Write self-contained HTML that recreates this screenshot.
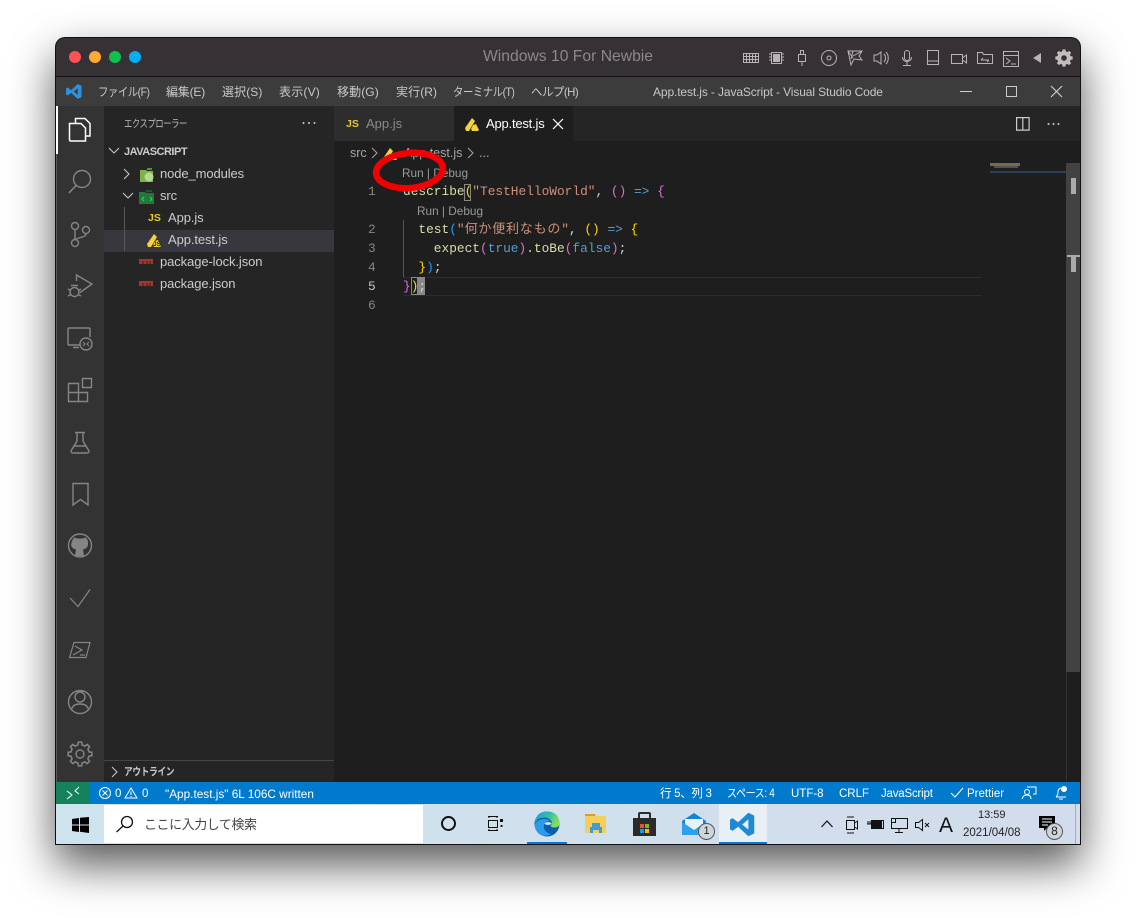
<!DOCTYPE html>
<html><head><meta charset="utf-8">
<style>
html,body{margin:0;padding:0;background:#fff;width:1136px;height:918px;overflow:hidden}
body{position:relative;font-family:"Liberation Sans","Noto Sans CJK JP",sans-serif}
.a{position:absolute}
.t{position:absolute;white-space:nowrap;line-height:16px;font-size:12.5px;color:#ccc;transform-origin:0 50%}
.m{font-size:12px;color:#c8c8c8;letter-spacing:-.6px;top:84px}
.f{font-size:13px;color:#cccccc;letter-spacing:-.1px}
.c{position:absolute;white-space:pre;font-family:"Liberation Mono","Noto Sans CJK JP",monospace;font-size:12.83px;line-height:19px;color:#d4d4d4;left:403px}
.n{position:absolute;white-space:pre;font-family:"Liberation Mono",monospace;font-size:12.83px;line-height:19px;color:#858585;left:368px}
.l{position:absolute;font-size:11.8px;color:#999;white-space:nowrap;line-height:14px}
.s{font-size:11.5px;color:#fff;top:786px;letter-spacing:0}
svg{position:absolute;overflow:visible}
.ti{fill:none;stroke:#b8b4b6;stroke-width:1}
</style></head><body>

<div class="a" style="left:55px;top:37px;width:1026px;height:808px;border-radius:10px 10px 0 0;box-shadow:0 20px 44px rgba(0,0,0,.66)"></div>

<div class="a" style="left:55px;top:37px;width:1026px;height:808px;background:#111;border-radius:10px 10px 0 0;overflow:hidden">
 <div class="a" style="left:1px;top:1px;width:1024px;height:38px;background:#353135;border-radius:9px 9px 0 0"></div>
 <div class="a" style="left:1px;top:40px;width:1024px;height:29px;background:#3c3c3c"></div>
 <div class="a" style="left:1px;top:69px;width:48px;height:676px;background:#333"></div>
 <div class="a" style="left:49px;top:69px;width:230px;height:676px;background:#252526"></div>
 <div class="a" style="left:279px;top:69px;width:746px;height:35px;background:#252526"></div>
 <div class="a" style="left:279px;top:104px;width:746px;height:641px;background:#1e1e1e"></div>
 <div class="a" style="left:279px;top:69px;width:120px;height:35px;background:#2d2d2d"></div>
 <div class="a" style="left:399px;top:69px;width:119px;height:35px;background:#1e1e1e"></div>
 <div class="a" style="left:1px;top:745px;width:1024px;height:22px;background:#007acc"></div>
 <div class="a" style="left:1px;top:745px;width:34px;height:22px;background:#16825d"></div>
 <div class="a" style="left:1px;top:767px;width:1024px;height:40px;background:linear-gradient(90deg,#cde4ef,#d0e0ec 50%,#d3dcec)"></div>
 <div class="a" style="left:49px;top:768px;width:319px;height:38px;background:#fff"></div>
 <div class="a" style="left:664px;top:767px;width:48px;height:40px;background:#e8f0f6"></div>
 <div class="a" style="left:664px;top:805px;width:48px;height:2px;background:#0078d7"></div>
 <div class="a" style="left:472px;top:805px;width:40px;height:2px;background:#0078d7"></div>
</div>

<!-- traffic lights -->
<div class="a" style="left:69px;top:51px;width:12px;height:12px;border-radius:50%;background:#ff5252"></div>
<div class="a" style="left:89px;top:51px;width:12px;height:12px;border-radius:50%;background:#ffa92e"></div>
<div class="a" style="left:109px;top:51px;width:12px;height:12px;border-radius:50%;background:#0fc04f"></div>
<div class="a" style="left:129px;top:51px;width:12px;height:12px;border-radius:50%;background:#05aef0"></div>
<div class="t" style="left:483px;top:48px;font-size:15.7px;line-height:18px;color:#8b888b">Windows 10 For Newbie</div>

<!-- mac toolbar icons -->
<svg style="left:0;top:0" width="1136" height="80">
 <path class="ti" d="M743.5 53.5h15v9h-15zM746.5 53.5v9M749.5 53.5v9M752.5 53.5v9M755.5 53.5v9M743.5 56.5h15M743.5 59.5h15"/>
 <path class="ti" d="M771.5 52.5h10v11h-10zM769 54h2M769 57h2M769 60h2M782 54h2M782 57h2M782 60h2"/><rect x="773" y="54" width="7" height="8" fill="#b8b4b6"/>
 <path class="ti" d="M800.5 50.5h3v4h-3zM798.5 54.5h7v7h-7zM802 62v4"/>
 <circle class="ti" cx="829" cy="58" r="7.5"/><circle class="ti" cx="829" cy="58" r="2"/>
 <path class="ti" d="M848 51h14l-3 5 3 4-8-1-3 6zM848 51l5 7M853 51l-2 8M862 51l-9 5"/>
 <path class="ti" d="M874 55h3l4-3v12l-4-3h-3zM884 54c2 2 2 6 0 8M886 52c3 3 3 9 0 12"/>
 <rect class="ti" x="904.5" y="50.5" width="5" height="10" rx="2.5"/><path class="ti" d="M902.5 57c0 6 9 6 9 0M907 62v3M903 65.5h8"/>
 <path class="ti" d="M927.5 50.5h11v14h-11zM927.5 61h11"/>
 <path class="ti" d="M951.5 54.5h11v9h-11zM962.5 58l4-3v8l-4-3"/>
 <path class="ti" d="M977.5 52.5h5l1 2h9v9h-15zM981 60h8M981 60l2-2M989 60l-2 2"/>
 <path class="ti" d="M1003.5 51.5h15v15h-15zM1003.5 55.5h15M1006 58l4 3-4 3M1011 64h5"/>
 <path d="M1041 53v10l-8-5z" fill="#b8b4b6"/>
 <g transform="translate(1064,58) scale(.7)"><polygon fill="#c2bec0" stroke="#c2bec0" points="-2.1,-9.06 -1.67,-11.88 1.67,-11.88 2.1,-9.06 4.93,-7.89 7.22,-9.58 9.58,-7.22 7.89,-4.93 9.06,-2.1 11.88,-1.67 11.88,1.67 9.06,2.1 7.89,4.93 9.58,7.22 7.22,9.58 4.93,7.89 2.1,9.06 1.67,11.88 -1.67,11.88 -2.1,9.06 -4.93,7.89 -7.22,9.58 -9.58,7.22 -7.89,4.93 -9.06,2.1 -11.88,1.67 -11.88,-1.67 -9.06,-2.1 -7.89,-4.93 -9.58,-7.22 -7.22,-9.58 -4.93,-7.89"/><circle r="4" fill="#353135"/></g>
</svg>

<!-- title bar -->
<svg style="left:66px;top:84px" width="16" height="15" viewBox="0 0 17 16"><path d="M12.5 0l4 2v12l-4 2-7-6.5L1.8 12.3 0 11.3V4.7l1.8-1 3.7 2.8zM12.5 4.5L8.3 8l4.2 3.5z" fill="#2f91d8"/></svg>
<div class="t m" style="left:98px;transform:scaleX(.87)">ファイル(F)</div>
<div class="t m" style="left:166px;letter-spacing:-.2px">編集(E)</div>
<div class="t m" style="left:222px;letter-spacing:.1px">選択(S)</div>
<div class="t m" style="left:279px;letter-spacing:.2px">表示(V)</div>
<div class="t m" style="left:337px;letter-spacing:.1px">移動(G)</div>
<div class="t m" style="left:396px;letter-spacing:.1px">実行(R)</div>
<div class="t m" style="left:453px;transform:scaleX(.87)">ターミナル(T)</div>
<div class="t m" style="left:531px;transform:scaleX(.96)">ヘルプ(H)</div>
<div class="t" style="left:653px;top:84px;font-size:12px;color:#c8c8c8;letter-spacing:-.12px">App.test.js - JavaScript - Visual Studio Code</div>
<svg style="left:0;top:80px" width="1136" height="22" fill="none" stroke="#ccc" stroke-width="1">
 <path d="M960 11.5h12"/><path d="M1006.5 6.5h10v10h-10z"/><path d="M1051 6l11 11M1062 6l-11 11" stroke-width="1.2"/>
</svg>

<!-- activity bar -->
<div class="a" style="left:56px;top:154px;width:1px;height:628px;background:#5a5a5a"></div>
<div class="a" style="left:56px;top:106px;width:2px;height:48px;background:#fff"></div>
<svg style="left:0;top:0" width="104" height="780" fill="none" stroke="#858585" stroke-width="1.4">
 <path stroke="#fff" stroke-width="1.5" d="M75.5 123v-4.5h9.5l5 5v12.500h-4"/>
 <path stroke="#fff" stroke-width="1.5" d="M69.5 123.5h11.5l4.500 4.500v13H71q-1.500 0-1.500-1.500z"/>
 <circle cx="82" cy="179" r="8.500"/><path stroke-width="1.600" d="M76 185.500L69 193"/>
 <circle cx="75" cy="226" r="3.500"/><circle cx="75" cy="243" r="3.500"/><circle cx="86" cy="230" r="3.500"/><path d="M75 229.500v10M86 233.500c0 5-9 3-10.500 6.500"/>
 <path d="M76.500 281v-6L92 284l-12 8.500"/><circle cx="74.500" cy="292" r="4.500"/><path d="M68 289l3 1.500M68 296l3-1.500M81 289l-3 1.500M81 296l-3-1.500M71 285.500h7"/>
 <path d="M80 345H69q-1 0-1-1v-15q0-1 1-1h20q1 0 1 1v8M73 347.500h6"/><circle cx="86" cy="344" r="6"/><path stroke-width="1" d="M83 342l2 2-2 2M89 342l-2 2 2 2"/>
 <path d="M68.500 383.500h10v18h-10zM68.500 392.500h19v9h-9M82.500 378.500h9v9h-9z"/>
 <path d="M75 432.500h10M77 433v8l-6 10q0 2 2 2h14q2 0 2-2l-6-10v-8M74 446h12"/>
 <path d="M73 483.500h15v21.500l-7.500-5.500-7.500 5.500z"/>
 <circle cx="80" cy="545.500" r="11.500"/><path fill="#858585" stroke="none" d="M72 541l2-3.500 3.500 1h5l3.500-1 2 3.500v4q-1 4-5 4.500l1 6.500h-9l1-6.500q-4-.5-5-4.500z"/>
 <path stroke-width="1.200" d="M70 598l8 8.500 12-17"/>
 <path stroke-width="1.200" d="M74 642.500h16l-4 15H69.500zM75 646l7 4-9 5M80 655h5"/>
 <circle cx="80" cy="702" r="11.500"/><circle cx="80" cy="697" r="5"/><path d="M71.500 710q1-6 8.500-6t8.500 6"/>
 <g transform="translate(80,754)"><polygon stroke-width="1.500" points="-2.1,-9.06 -1.67,-11.88 1.67,-11.88 2.1,-9.06 4.93,-7.89 7.22,-9.58 9.58,-7.22 7.89,-4.93 9.06,-2.1 11.88,-1.67 11.88,1.67 9.06,2.1 7.89,4.93 9.58,7.22 7.22,9.58 4.93,7.89 2.1,9.06 1.67,11.88 -1.67,11.88 -2.1,9.06 -4.93,7.89 -7.22,9.58 -9.58,7.22 -7.89,4.93 -9.06,2.1 -11.88,1.67 -11.88,-1.67 -9.06,-2.1 -7.89,-4.93 -9.58,-7.22 -7.22,-9.58 -4.93,-7.89"/><circle r="4"/></g>
</svg>

<!-- sidebar -->
<div class="t" style="left:124px;top:116px;font-size:10.5px;color:#bbb;letter-spacing:-.5px;transform:scaleX(.79)">エクスプローラー</div>
<svg style="left:300px;top:120px" width="20" height="6" fill="#ccc"><circle cx="3.500" cy="3" r="1"/><circle cx="9" cy="3" r="1"/><circle cx="14.500" cy="3" r="1"/></svg>
<div class="a" style="left:104px;top:230px;width:230px;height:22px;background:#37373d"></div>
<div class="a" style="left:124px;top:207px;width:1px;height:44px;background:#585858"></div>
<svg style="left:104px;top:140px" width="60" height="120" fill="none" stroke="#ccc" stroke-width="1">
 <path d="M5 8l5 5 5-5"/><path d="M20 29l5 5-5 5"/><path d="M19 53l5 5 5-5"/>
</svg>
<div class="t" style="left:124px;top:144px;font-size:11px;font-weight:bold;color:#ccc;letter-spacing:-.5px">JAVASCRIPT</div>
<div class="t f" style="left:160px;top:166px">node_modules</div>
<div class="t f" style="left:160px;top:188px">src</div>
<div class="t f" style="left:168px;top:210px">App.js</div>
<div class="t f" style="left:168px;top:232px">App.test.js</div>
<div class="t f" style="left:160px;top:254px">package-lock.json</div>
<div class="t f" style="left:160px;top:276px">package.json</div>
<svg style="left:0;top:0" width="340" height="300">
 <path d="M140 170h6l1 1h6v11h-13z" fill="#7cb342"/><path d="M147 168h5v2h-5z" fill="#5f8f30"/><circle cx="149" cy="177" r="4.500" fill="#cfe3b8" opacity=".75"/>
 <path d="M139 192h6l1 1h8v11h-15z" fill="#1f7a3c"/><path d="M146 190h6v2h-6z" fill="#1a5c30"/><path d="M144 197l-2 2 2 2M150 197l2 2-2 2" stroke="#3fd05e" fill="none"/>
 <path d="M147 244l7-10 3 3-3 5-3 5h-3zM153 245l2-4 3-1 3 6-1 1h-6z" fill="#f3d23e"/>
 <path d="M139 259h14v5h-14zM139 281h14v5h-14z" fill="#a83232"/>
 <path d="M143 261v3M147 261v3M150 261v3M143 283v3M147 283v3M150 283v3" stroke="#252526"/>
</svg>
<div class="t" style="left:148px;top:210px;font-size:10.5px;font-weight:bold;color:#e8c92b">JS</div>
<div class="t" style="left:153px;top:241px;font-size:6.5px;line-height:7px;font-weight:bold;color:#222">JS</div>
<div class="a" style="left:104px;top:760px;width:230px;height:1px;background:#444"></div>
<svg style="left:110px;top:766px" width="12" height="12" fill="none" stroke="#ccc"><path d="M2 1l5 5-5 5"/></svg>
<div class="t" style="left:124px;top:764px;font-size:10.5px;font-weight:bold;color:#ccc;letter-spacing:-.3px;transform:scaleX(.82)">アウトライン</div>

<!-- tabs -->
<div class="t" style="left:346px;top:116px;font-size:10.5px;font-weight:bold;color:#e8c92b">JS</div>
<div class="t" style="left:366px;top:116px;font-size:13px;color:#8a8a8a">App.js</div>
<svg style="left:465px;top:117px" width="16" height="15"><path d="M0 11l7-10 3 3-3 5-3 5H1zM6 12l2-4 3-1 3 6-1 1H7z" fill="#f3d23e"/></svg>
<div class="t" style="left:486px;top:116px;font-size:13px;color:#fff;letter-spacing:-.2px">App.test.js</div>
<svg style="left:552px;top:118px" width="12" height="12" stroke="#fff" stroke-width="1.2"><path d="M1 1l10 10M11 1L1 11"/></svg>
<svg style="left:1016px;top:117px" width="14" height="14" fill="none" stroke="#ccc" stroke-width="1.2"><path d="M.6.6h12.5v12.5H.6zM6.8.6v12.5"/></svg>
<svg style="left:1046px;top:121px" width="16" height="6" fill="#ccc"><circle cx="2.500" cy="3" r="1"/><circle cx="7.500" cy="3" r="1"/><circle cx="12.500" cy="3" r="1"/></svg>

<!-- breadcrumb -->
<div class="t" style="left:350px;top:145px;font-size:12.5px;color:#a5a5a5">src</div>
<svg style="left:370px;top:147px" width="120" height="12" fill="none" stroke="#a5a5a5"><path d="M2 1l5 5-5 5"/><path d="M98 1l5 5-5 5"/></svg>
<svg style="left:384px;top:146px" width="14" height="14"><path d="M0 11l6-9 3 3-3 5-3 4H1zM5 12l2-3 3-1 3 5-1 1H6z" fill="#f3d23e"/></svg>
<div class="t" style="left:404px;top:145px;font-size:12.5px;color:#a5a5a5">App.test.js</div>
<div class="t" style="left:479px;top:145px;font-size:12.5px;color:#a5a5a5">...</div>

<!-- code -->
<div class="a" style="left:403px;top:277px;width:579px;height:1px;background:#2c2c2c"></div>
<div class="a" style="left:403px;top:295px;width:579px;height:1px;background:#2c2c2c"></div>
<div class="a" style="left:403px;top:220px;width:1px;height:57px;background:#555"></div>
<div class="l" style="left:402px;top:166px">Run | Debug</div>
<div class="l" style="left:417px;top:204px">Run | Debug</div>
<div class="n" style="top:182px">1</div>
<div class="n" style="top:220px">2</div>
<div class="n" style="top:239px">3</div>
<div class="n" style="top:258px">4</div>
<div class="n" style="top:277px;color:#c6c6c6">5</div>
<div class="n" style="top:296px">6</div>
<div class="a" style="left:464px;top:184px;width:5px;height:15px;border:1px solid #888"></div>
<div class="c" style="top:182px"><span style="color:#dcdcaa">describe</span><span style="color:#ffd700">(</span><span style="color:#ce9178">"TestHelloWorld"</span>, <span style="color:#da70d6">()</span> <span style="color:#569cd6">=&gt;</span> <span style="color:#da70d6">{</span></div>
<div class="c" style="top:220px">  <span style="color:#dcdcaa">test</span><span style="color:#179fff">(</span><span style="color:#ce9178">"<span style="letter-spacing:.8px;font-size:13px">何か便利なもの</span>"</span>, <span style="color:#ffd700">()</span> <span style="color:#569cd6">=&gt;</span> <span style="color:#ffd700">{</span></div>
<div class="c" style="top:239px">    <span style="color:#dcdcaa">expect</span><span style="color:#da70d6">(</span><span style="color:#569cd6">true</span><span style="color:#da70d6">)</span>.<span style="color:#dcdcaa">toBe</span><span style="color:#da70d6">(</span><span style="color:#569cd6">false</span><span style="color:#da70d6">)</span>;</div>
<div class="c" style="top:258px">  <span style="color:#ffd700">}</span><span style="color:#179fff">)</span>;</div>
<div class="a" style="left:411px;top:277px;width:5px;height:16px;border:1px solid #888"></div>
<div class="a" style="left:418px;top:277px;width:7px;height:18px;background:#888"></div>
<div class="c" style="top:277px"><span style="color:#da70d6">}</span><span style="color:#ffd700">)</span>;</div>

<!-- red circle -->
<svg style="left:370px;top:148px" width="80" height="50"><ellipse cx="39.500" cy="22.500" rx="33.500" ry="17.500" transform="rotate(-5 39.500 22.500)" fill="none" stroke="#f00002" stroke-width="6.500"/></svg>

<!-- minimap + scrollbar -->
<div class="a" style="left:990px;top:163px;width:30px;height:3px;background:#6f6d58"></div>
<div class="a" style="left:994px;top:166px;width:24px;height:2px;background:#5a5048"></div>
<div class="a" style="left:990px;top:171px;width:76px;height:2px;background:#264058"></div>
<div class="a" style="left:1066px;top:163px;width:14px;height:509px;background:#424242"></div>
<div class="a" style="left:1066px;top:672px;width:1px;height:110px;background:#333"></div>
<div class="a" style="left:1071px;top:178px;width:5px;height:16px;background:#aaa"></div>
<div class="a" style="left:1067px;top:255px;width:13px;height:2px;background:#aaa"></div>
<div class="a" style="left:1071px;top:257px;width:5px;height:15px;background:#aaa"></div>

<!-- status bar -->
<svg style="left:66px;top:786px" width="16" height="14" fill="none" stroke="#fff"><path d="M1 13l5-4-5-4"/><path d="M13 1l-4 4 4 3"/></svg>
<svg style="left:98px;top:786px" width="60" height="14" fill="none" stroke="#fff"><circle cx="7" cy="7" r="5.500"/><path d="M4.500 4.500l5 5M9.500 4.500l-5 5"/><path d="M33 2l6 10H27zM33 5.500v3.500M33 10v1"/></svg>
<div class="t s" style="left:115px">0</div>
<div class="t s" style="left:142px">0</div>
<div class="t s" style="left:165px;font-size:11.8px">"App.test.js" 6L 106C written</div>
<div class="t s" style="left:660px;letter-spacing:-.3px">行 5、列 3</div>
<div class="t s" style="left:727px;letter-spacing:-.4px;transform:scaleX(.87)">スペース: 4</div>
<div class="t s" style="left:791px">UTF-8</div>
<div class="t s" style="left:839px">CRLF</div>
<div class="t s" style="left:881px;letter-spacing:-.2px">JavaScript</div>
<svg style="left:950px;top:787px" width="14" height="12" fill="none" stroke="#fff"><path d="M1 6l4 4 8-9"/></svg>
<div class="t s" style="left:967px">Prettier</div>
<svg style="left:1021px;top:786px" width="16" height="15" fill="none" stroke="#fff"><circle cx="6" cy="6" r="2.500"/><path d="M1 13q1-4 5-4t4 4M6 1h9v7h-3"/></svg>
<svg style="left:1053px;top:785px" width="16" height="16" fill="none" stroke="#fff"><path d="M3 12q2-2 2-5t3-4M3 12h10M6 14h4"/><circle cx="11" cy="4" r="3" fill="#fff" stroke="none"/></svg>

<!-- taskbar -->
<svg style="left:72px;top:817px" width="17" height="16" fill="#000"><path d="M0 2l7-1v6.500H0zM8 .8L17 0v7.500H8zM0 8.500h7V15l-7-1zM8 8.500h9V16l-9-1.200z"/></svg>
<svg style="left:116px;top:813px" width="20" height="20" fill="none" stroke="#111" stroke-width="1.300"><circle cx="11" cy="9" r="5.500"/><path d="M7 13L.5 19"/></svg>
<div class="t" style="left:144px;top:816px;font-size:13px;line-height:18px;color:#444;letter-spacing:-.45px">ここに入力して検索</div>
<div class="a" style="left:441px;top:816px;width:11px;height:11px;border:2.500px solid #111;border-radius:50%"></div>
<svg style="left:487px;top:815px" width="18" height="18" fill="none" stroke="#111"><path d="M1 1.500h10M1 15.500h10M1.500 5.500h9v7h-9zM2 1v2M10 1v2M2 14v2M10 14v2"/><rect x="13" y="4" width="3" height="3" fill="#111" stroke="none"/><rect x="13.500" y="10" width="2" height="2" fill="#111" stroke="none"/></svg>
<!-- edge -->
<svg style="left:534px;top:811px" width="26" height="26"><defs><linearGradient id="eg" x1="0" y1="0" x2="1" y2=".4"><stop offset="0" stop-color="#1b9de2"/><stop offset=".6" stop-color="#35c1a0"/><stop offset="1" stop-color="#86dd5a"/></linearGradient></defs><circle cx="13" cy="13" r="12.500" fill="#0c5ea8"/><path d="M1 12Q2 .5 13 .5q12 0 12.500 12 0 4-5 4-4 0-4-2 2-1 1-4-2-4-7-4-7 0-9.500 5.500z" fill="url(#eg)"/><path d="M10 14q-1 7 7 9-7 4-13-1-3.500-4-3-9 3-5 9-5 5 0 6 2-6 0-6 4z" fill="#2b9bea"/><ellipse cx="14" cy="12.500" rx="3.500" ry="1.500" fill="#d0e0ec"/></svg>
<!-- explorer -->
<svg style="left:585px;top:814px" width="22" height="20"><path d="M0 0h10l2 2h9v17H0z" fill="#f5cf5b"/><path d="M0 0h10v2H0z" fill="#d99f20"/><path d="M5 13h12v6h-3v-3H8v3H5z" fill="#3f9be0"/><path d="M7 9h8v4H7z" fill="#3f9be0"/></svg>
<!-- store -->
<svg style="left:633px;top:812px" width="24" height="24"><path d="M0 6h23v18H0z" fill="#2b2b2b"/><path d="M6 6V2q0-1 1-1h9q1 0 1 1v4" fill="none" stroke="#2b2b2b" stroke-width="2"/><path d="M7 12h4v4H7z" fill="#f25022"/><path d="M12 12h4v4h-4z" fill="#7fba00"/><path d="M7 17h4v4H7z" fill="#00a4ef"/><path d="M12 17h4v4h-4z" fill="#ffb900"/></svg>
<!-- mail -->
<svg style="left:682px;top:813px" width="24" height="22"><path d="M0 8L12 0l12 8v14H0z" fill="#1383d8"/><path d="M3 6h18v6l-9 6-9-6z" fill="#e7f3fa"/><path d="M0 9l12 8 12-8v13H0z" fill="#2fa0eb"/></svg>
<div class="a" style="left:698px;top:823px;width:15px;height:15px;border-radius:50%;background:#cfd6db;border:1px solid #555;font-size:11px;line-height:15px;text-align:center;color:#222">1</div>
<!-- vscode -->
<svg style="left:730px;top:812px" width="25" height="25" viewBox="0 0 17 16"><path d="M12.5 0l4 2v12l-4 2-7-6.5L1.8 12.3 0 11.3V4.7l1.8-1 3.7 2.8zM12.5 4.5L8.3 8l4.2 3.5z" fill="#1f8ad2"/></svg>
<!-- tray -->
<svg style="left:0;top:800px" width="1000" height="44" fill="none" stroke="#111">
 <path stroke-width="1.200" d="M821.500 27l5.500-6 5.500 6"/>
 <path d="M846.500 20.500h8v9h-8zM854.500 23l3-2v8l-3-2M847 17h7M847 33h7"/>
 <rect x="871" y="20" width="11" height="8" fill="#111" stroke="none"/><path d="M871.500 20.500h12v8h-12zM867 24h4M868 21v3M870 21v3"/>
 <path d="M891.500 18.500h16v10h-16zM899 28.500v4M895 32.500h8M891.500 18.500h4v4h-4z"/>
 <path d="M915.500 22.500h3l4-3v11l-4-3h-3zM925 23l4 4M929 23l-4 4"/>
</svg>
<div class="t" style="left:939px;top:815px;font-size:21px;line-height:22px;color:#111">A</div>
<div class="t" style="left:978px;top:809px;font-size:11px;line-height:12px;color:#222">13:59</div>
<div class="t" style="left:963px;top:827px;font-size:11.5px;line-height:12px;color:#222">2021/04/08</div>
<svg style="left:1039px;top:816px" width="16" height="16"><path d="M0 0h16v12H8l-3 3v-3H0z" fill="#000"/><path d="M3 3h10M3 6h10M3 9h6" stroke="#fff"/></svg>
<div class="a" style="left:1046px;top:823px;width:15px;height:15px;border-radius:50%;background:#cfd6db;border:1px solid #555;font-size:12px;line-height:15px;text-align:center;color:#222">8</div>
<div class="a" style="left:1075px;top:804px;width:1px;height:40px;background:#aab"></div>
</body></html>
